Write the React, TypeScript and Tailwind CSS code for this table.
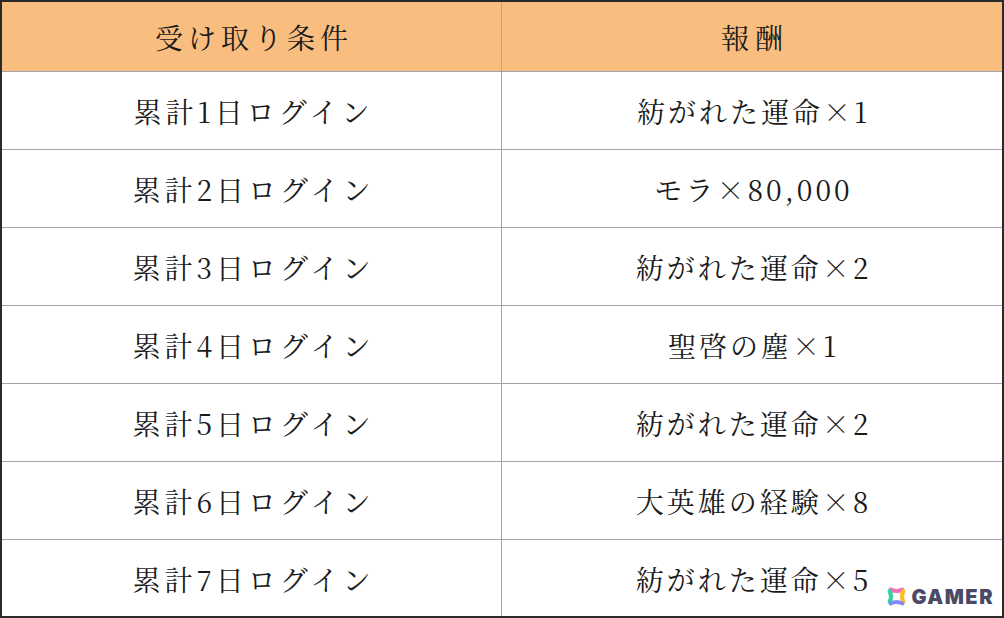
import React from 'react';

const rows: [string, string][] = [
  ['累計1日ログイン', '紡がれた運命×1'],
  ['累計2日ログイン', 'モラ×80,000'],
  ['累計3日ログイン', '紡がれた運命×2'],
  ['累計4日ログイン', '聖啓の塵×1'],
  ['累計5日ログイン', '紡がれた運命×2'],
  ['累計6日ログイン', '大英雄の経験×8'],
  ['累計7日ログイン', '紡がれた運命×5'],
];

const font = {
  fontFamily: '"Noto Serif CJK JP", "Liberation Serif", "Noto Sans CJK JP", serif',
};

const GamerLogo = () => (
  <div className="absolute right-[8px] bottom-[9px] flex items-center gap-[5px]">
    <svg width="21" height="21" viewBox="0 0 20 20" fill="none" strokeWidth="4" strokeLinecap="round">
      <path d="M4.5 3.5 Q10 6 15.5 3.5" stroke="#f472b6" />
      <path d="M3.5 5 Q6 10 3.5 15" stroke="#34d399" />
      <path d="M16.5 5 Q14 10 16.5 15" stroke="#fbbf24" />
      <path d="M4.5 16.5 Q10 14 15.5 16.5" stroke="#818cf8" />
    </svg>
    <span
      className="text-[20px] leading-none font-black tracking-[1.5px] text-[#4b4a66]"
      style={{ fontFamily: '"Inter", "Liberation Sans", sans-serif' }}
    >
      GAMER
    </span>
  </div>
);

export default function App() {
  return (
    <div className="relative w-[1004px] h-[618px] bg-white border-2 border-[#2a2a2a] overflow-hidden" style={font}>
      <div className="grid grid-cols-[500px_1fr] h-[70px] bg-[#f9bd80] border-b border-[#a3a3ad] text-[28px] text-[#1a1a1a]">
        <div className="flex items-center justify-center border-r border-[#c9a07a] tracking-[5px] pl-[5px]">受け取り条件</div>
        <div className="flex items-center justify-center tracking-[6px] pl-[6px]">報酬</div>
      </div>
      {rows.map(([cond, reward], i) => (
        <div
          key={cond}
          className={`grid grid-cols-[500px_1fr] h-[78px] text-[28px] text-[#1a1a1a] ${i < rows.length - 1 ? 'border-b border-[#a3a3ad]' : ''}`}
        >
          <div className="flex items-center justify-center border-r border-[#a3a3ad] tracking-[4px] pl-[4px]">{cond}</div>
          <div className="flex items-center justify-center tracking-[3px] pl-[3px]">{reward}</div>
        </div>
      ))}
      <GamerLogo />
    </div>
  );
}
